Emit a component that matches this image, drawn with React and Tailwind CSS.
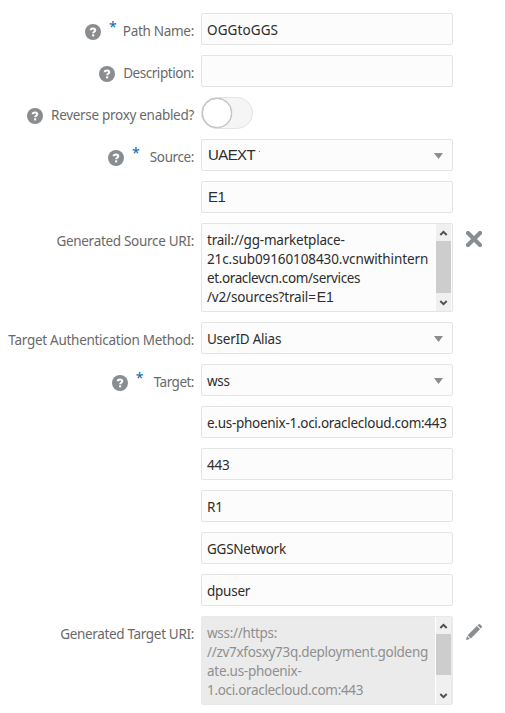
const text = "font-['Noto_Sans','Open_Sans',sans-serif] text-[13.5px]";

function Help() {
  return (
    <svg className="mt-[11px] h-4 w-4 shrink-0" viewBox="0 0 16 16">
      <circle cx="8" cy="8" r="8" fill="#898d90" />
      <path d="M5.7 6.3C5.7 5 6.7 4.5 8 4.5s2.2.6 2.2 1.8c0 1.5-2 1.4-2 2.9" fill="none" stroke="#fff" strokeWidth="2.1" />
      <rect x="7.1" y="10.3" width="2.1" height="2.1" fill="#fff" />
    </svg>
  );
}

function Row({ label, help, required, gap = "ml-2", spacing = "tracking-[-0.3px]", children, action }) {
  return (
    <div className="flex items-start">
      <div className="flex w-[194px] shrink-0 items-start justify-end">
        {help && <Help />}
        {required && (
          <span className="mt-[4px] ml-2 w-2 text-center font-['Noto_Sans',sans-serif] text-[14px] leading-5 text-[#0467b0]">*</span>
        )}
        {label && (
          <span className={`${text} ${spacing} ${gap} mt-[8px] leading-5 whitespace-nowrap text-[#696969]`}>
            {label}
          </span>
        )}
      </div>
      <div className="ml-[7px] w-[252px] shrink-0">{children}</div>
      {action}
    </div>
  );
}

function Field({ value, select, spacing = "tracking-[-0.25px]", pasted, mark }) {
  return (
    <div className="flex h-8 items-start overflow-hidden rounded-[2px] border border-[#e4e4e4] bg-[#fcfcfc] pl-[5px]">
      <span className={`${pasted ? "mt-[5px] ml-px font-['Liberation_Sans',Arial,sans-serif] text-[15px]" : `${text} mt-[6px]`} ${spacing} leading-5 whitespace-nowrap text-[#2d2d2d]`}>
        {value}
      </span>
      {mark && <span className="mt-[11px] ml-[4px] h-px w-px bg-[#5b7fa3]" />}
      {select && (
        <svg className="mt-[13px] mr-[9px] ml-auto h-[6px] w-[9px]" viewBox="0 0 9 6">
          <path d="M0 0h9L4.5 6z" fill="#898d90" />
        </svg>
      )}
    </div>
  );
}

function Chevron({ down }) {
  return (
    <svg className="h-[17px] w-[15px]" viewBox="0 0 15 17">
      <path d={down ? "M4.3 7l3.2 3.1L10.7 7" : "M4.3 11l3.2-3.1 3.2 3.1"} fill="none" stroke="#505050" strokeWidth="2" />
    </svg>
  );
}

function Area({ disabled, thumb, children }) {
  return (
    <div className={`flex h-[89px] overflow-hidden rounded-[2px] border pl-[5px] ${disabled ? "border-[#e9e9e9] bg-[#ebebeb] text-[#8f8f8f]" : "border-[#e4e4e4] bg-[#fcfcfc] text-[#2d2d2d]"}`}>
      <div className={`${text} flex min-w-0 flex-1 flex-col pt-[7px] leading-[19px] whitespace-nowrap`}>{children}</div>
      <div className={`mr-px flex shrink-0 flex-col items-center justify-between bg-[#f0f0f0] ${disabled ? "border-l border-white" : ""}`}>
        <Chevron />
        <div className="flex-1">
          <div className={`w-[15px] bg-[#cdcdcd] ${thumb}`} />
        </div>
        <Chevron down />
      </div>
    </div>
  );
}

export default function App() {
  return (
    <main className="flex h-[713px] w-[505px] flex-col gap-[10px] overflow-hidden bg-white pt-[13px]">
      <Row label="Path Name:" help required gap="ml-[6px]"><Field value="OGGtoGGS" spacing="tracking-[0.1px]" /></Row>
      <Row label="Description:" help spacing="tracking-[-0.45px]"><Field value="" /></Row>
      <Row label="Reverse proxy enabled?" help>
        <div className="h-8 w-[52px] rounded-full border border-[#e4e4e4] bg-[#f5f5f5]">
          <div className="h-[30px] w-[30px] rounded-full border border-[#c0c0c0] bg-white shadow-[0_0_1px_#aaa]" />
        </div>
      </Row>
      <Row label="Source:" help required gap="ml-[10px]" spacing="tracking-[-0.4px]"><Field value="UAEXT" pasted mark select spacing="tracking-[-0.6px]" /></Row>
      <Row><Field value="E1" pasted spacing="tracking-[-0.6px]" /></Row>
      <Row
        label="Generated Source URI:"
        action={
          <svg className="mt-[8px] ml-[13px] h-4 w-4" viewBox="0 0 16 16">
            <path d="M2 2l12 12M14 2L2 14" stroke="#898d90" strokeWidth="4.2" strokeLinecap="round" />
          </svg>
        }
      >
        <Area thumb="h-[52px]">
          <span className="tracking-[-0.22px]">trail://gg-marketplace-</span>
          <span className="tracking-[-0.1px]">21c.sub09160108430.vcnwithintern</span>
          <span className="tracking-[-0.38px]">et.oraclevcn.com/services</span>
          <span className="tracking-[-0.17px]">/v2/sources?trail=<span className="ml-px font-['Liberation_Sans',Arial,sans-serif] text-[14px]">E1</span></span>
        </Area>
      </Row>
      <Row label="Target Authentication Method:" spacing="tracking-[-0.28px]"><Field value="UserID Alias" select /></Row>
      <Row label="Target:" help required gap="ml-[10px]" spacing="tracking-[-0.5px]"><Field value="wss" select /></Row>
      <Row><Field value="e.us-phoenix-1.oci.oraclecloud.com:443" spacing="tracking-[-0.28px]" /></Row>
      <Row><Field value="443" /></Row>
      <Row><Field value="R1" /></Row>
      <Row><Field value="GGSNetwork" /></Row>
      <Row><Field value="dpuser" /></Row>
      <Row
        label="Generated Target URI:"
        spacing="tracking-[-0.33px]"
        action={
          <svg className="mt-[8px] ml-[13px] h-4 w-4" viewBox="0 0 16 16" fill="#898d90">
            <path d="M0 16l1-4 3 3zM1.6 11.2L10.8 2l3.2 3.2-9.2 9.2zM11.5 1.3L12.3.5q1-.9 2 0l1.2 1.2q.9 1 0 2l-.8.8z" />
          </svg>
        }
      >
        <Area disabled thumb="h-[41px]">
          <span className="tracking-[-0.3px]">wss://https:</span>
          <span className="tracking-[-0.3px]">//zv7xfosxy73q.deployment.goldeng</span>
          <span className="tracking-[-0.27px]">ate.us-phoenix-</span>
          <span className="tracking-[-0.32px]">1.oci.oraclecloud.com:443</span>
        </Area>
      </Row>
    </main>
  );
}
